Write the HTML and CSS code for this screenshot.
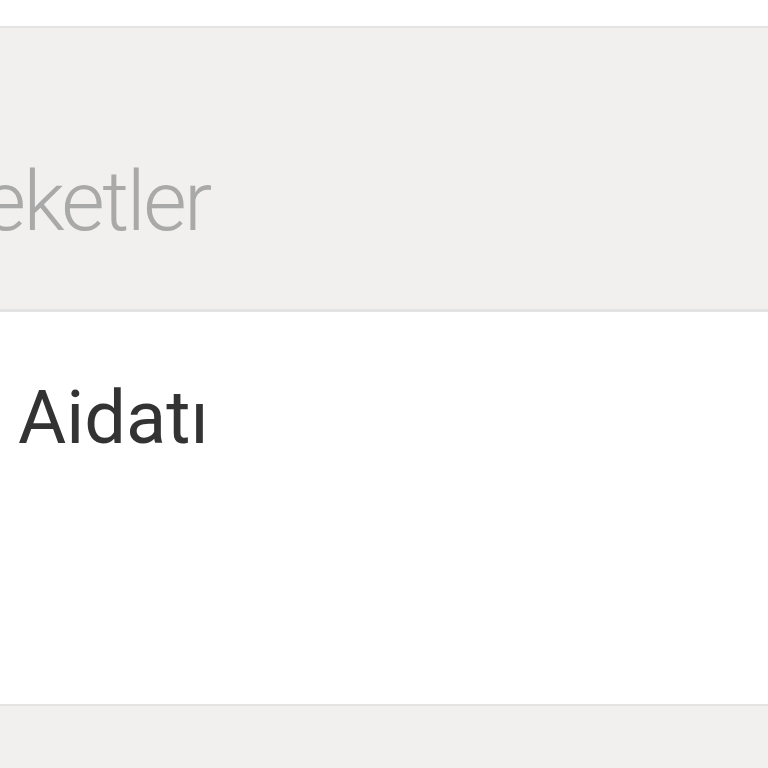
FILE: index.html
```html
<!DOCTYPE html>
<html lang="tr">
<head>
<meta charset="utf-8">
<link rel="stylesheet" href="styles.css">
</head>
<body>
<div class="topbar"></div>
<section class="header">
  <div class="header-title">Hareketler</div>
</section>
<section class="row">
  <div class="row-title">Aidatı</div>
</section>
<section class="footer"></section>
</body>
</html>
```
FILE: styles.css
```css
html, body {
  margin: 0;
  padding: 0;
  background: #f1f0ef;
  font-family: Roboto, "Liberation Sans", sans-serif;
  overflow: hidden;
}
.topbar {
  height: 26px;
  background: #ffffff;
}
.header {
  background: #f1f0ef;
  border-top: 2px solid #e3e3e3;
  border-bottom: 3px solid #e4e3e3;
  overflow: hidden;
  padding-top: 132px;
  height: 149px;
}
.header-title {
  font-size: 84px;
  line-height: 84px;
  font-weight: 300;
  color: #a9a9a9;
  letter-spacing: -2.5px;
  margin-left: -142px;
  white-space: nowrap;
}
.row {
  background: #ffffff;
  padding-top: 69px;
  height: 323px;
  border-bottom: 2px solid #e3e3e3;
}
.row-title {
  font-size: 74px;
  line-height: 74px;
  font-weight: 400;
  color: #333333;
  margin-left: 18px;
}
.footer {
  height: 100px;
  background: #f1f0ef;
}
```
